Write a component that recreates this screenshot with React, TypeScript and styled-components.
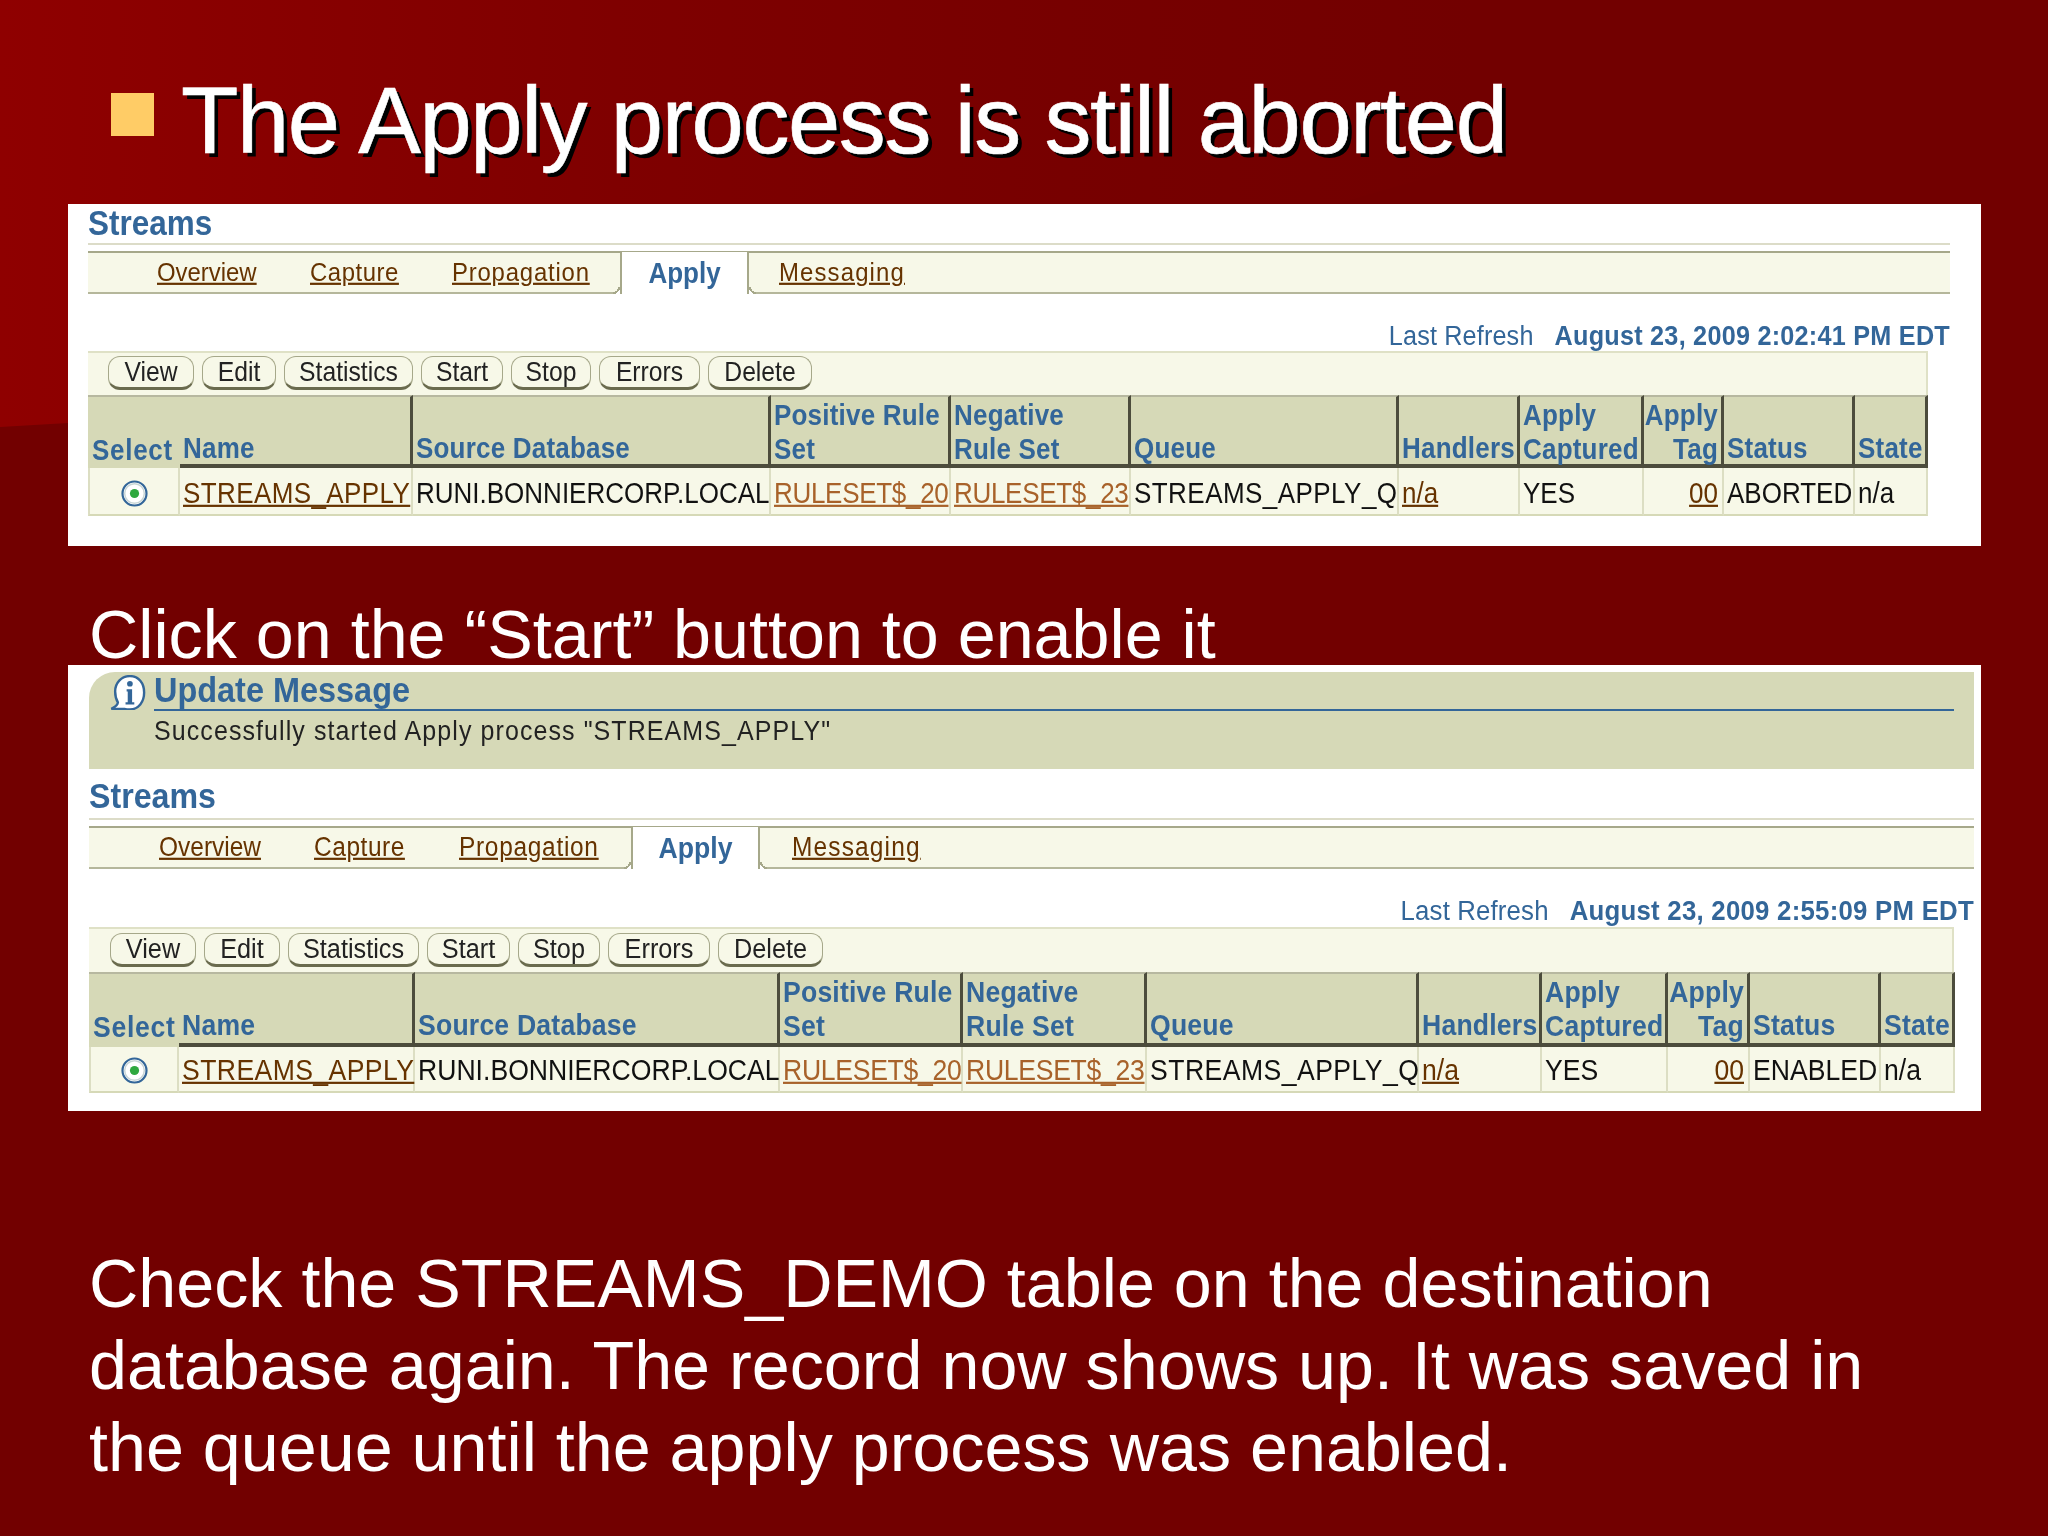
import React from "react";
import styled, { createGlobalStyle, css } from "styled-components";

const Global = createGlobalStyle`
  html, body { margin: 0; padding: 0; background: #720000; }
  * { box-sizing: border-box; }
`;

const stretched = css`
  display: inline-block;
  transform: scaleY(1.1);
  transform-origin: 50% 60%;
`;

const Slide = styled.main`
  position: relative;
  width: 2048px;
  height: 1536px;
  overflow: hidden;
  background: #720000;
  font-family: "Liberation Sans", Arial, sans-serif;
  isolation: isolate;
  &::before {
    content: "";
    position: absolute;
    inset: 0;
    z-index: -1;
    background: linear-gradient(to right, #8f0000 0, #7f0000 30%, #770000 52%, #720000 72%);
    clip-path: polygon(0 0, 100% 0, 100% 0, 1000px 300px, 68px 423px, 0 427px);
  }
`;

const TitleRow = styled.header`
  display: flex;
  align-items: flex-start;
  gap: 27px;
  height: 204px;
  padding: 71px 0 0 111px;
`;

const Bullet = styled.span`
  width: 43px;
  height: 43px;
  margin-top: 22px;
  background: #ffcc66;
`;

const Title = styled.h1`
  margin: 0;
  font-size: 94px;
  line-height: 100px;
  font-weight: 400;
  letter-spacing: -1.43px;
  color: #fff;
  -webkit-text-stroke: 0.6px #fff;
  text-shadow: 4px 4px 0 #000;
  white-space: nowrap;
`;

const Caption = styled.p`
  margin: 0;
  height: 119px;
  padding: 57px 0 0 89px;
  font-size: 68.25px;
  line-height: 62px;
  color: #fff;
  white-space: nowrap;
`;

const Closing = styled.p`
  margin: 131px 0 0 89px;
  width: 1800px;
  font-size: 68.25px;
  line-height: 82px;
  color: #fff;
`;

const Panel = styled.section<{ $size: number; $height: number; $inset: number; $top: number }>`
  position: relative;
  width: 1913px;
  height: ${(p) => p.$height}px;
  margin-left: 68px;
  padding: ${(p) => p.$top}px 0 0 ${(p) => p.$inset}px;
  background: #fff;
  font-size: ${(p) => p.$size}px;
  filter: blur(0.55px);
`;

const Content = styled.div<{ $width: number }>`
  width: ${(p) => p.$width}px;
`;

const MessageBox = styled.div`
  display: flex;
  height: 97px;
  padding: 3px 20px 0 22px;
  background: #d6d9b7;
  border-top-left-radius: 26px;
`;

const MessageIcon = styled.svg`
  flex: none;
  width: 38px;
  height: 35px;
  margin: 0 7px 0 -2px;
`;

const MessageBody = styled.div`
  flex: 1;
`;

const MessageTitle = styled.div`
  height: 36px;
  border-bottom: 2px solid #336699;
  font-size: 1.22em;
  font-weight: 700;
  line-height: 30px;
  color: #336699;
  span { ${stretched} }
`;

const MessageText = styled.div`
  margin-top: 6px;
  font-size: 0.94em;
  line-height: 26px;
  color: #222;
  letter-spacing: 1.08px;
  span { ${stretched} }
`;

const SectionTitle = styled.h2<{ $height: number }>`
  display: flex;
  align-items: flex-end;
  height: ${(p) => p.$height}px;
  margin: 0;
  padding-bottom: ${(p) => (p.$height < 45 ? 3.5 : 6)}px;
  border-bottom: 2px solid #dcdcc8;
  font-size: 1.21em;
  font-weight: 700;
  color: #336699;
  line-height: 32px;
  span { ${stretched} }
`;

const TabBar = styled.nav<{ $offset: number }>`
  display: flex;
  align-items: stretch;
  height: 43px;
  margin-top: 6px;
  padding-left: ${(p) => p.$offset}px;
  background: #f7f8e8;
  border-top: 2px solid #a6a88a;
  border-bottom: 2px solid #b5b79b;
`;

const TabLink = styled.a<{ $width: number; $spacing: number }>`
  flex: none;
  width: ${(p) => p.$width}px;
  align-self: center;
  margin-top: -1px;
  font-size: 0.92em;
  letter-spacing: ${(p) => p.$spacing}px;
  color: #663300;
  text-decoration: none;
  span {
    ${stretched}
    text-decoration: underline;
    text-underline-offset: 2px;
  }
`;

const ActiveTab = styled.a<{ $width: number; $gap: number }>`
  position: relative;
  flex: none;
  display: flex;
  justify-content: center;
  align-items: center;
  width: ${(p) => p.$width}px;
  margin: -1px ${(p) => p.$gap}px -2px 0;
  padding-top: 1px;
  background: #fff;
  border-left: 2px solid #a6a88a;
  border-right: 2px solid #a6a88a;
  font-size: 1em;
  font-weight: 700;
  color: #336699;
  text-decoration: none;
  span { ${stretched} }
  &::before, &::after {
    content: "";
    position: absolute;
    bottom: 0;
    width: 7px;
    height: 7px;
  }
  &::before {
    left: -9px;
    background: radial-gradient(circle at 0 0, #f7f8e8 5px, #a6a88a 5px 7px, #fff 7px);
  }
  &::after {
    right: -9px;
    background: radial-gradient(circle at 100% 0, #f7f8e8 5px, #a6a88a 5px 7px, #fff 7px);
  }
`;

const Refresh = styled.div<{ $height: number; $lift: number }>`
  display: flex;
  justify-content: flex-end;
  align-items: flex-end;
  gap: 21px;
  height: ${(p) => p.$height}px;
  font-size: 0.97em;
  line-height: 28px;
  letter-spacing: 0.15px;
  color: #336699;
  padding-bottom: ${(p) => p.$lift}px;
  span { ${stretched} }
`;

const RefreshDate = styled.span`
  font-weight: 700;
  letter-spacing: 0.24px;
`;

const Toolbar = styled.div<{ $width: number; $height: number; $pad: number }>`
  display: flex;
  align-items: center;
  gap: 8px;
  width: ${(p) => p.$width}px;
  height: ${(p) => p.$height}px;
  padding: 0 0 2px ${(p) => p.$pad}px;
  background: #f7f8e8;
  border-top: 2px solid #dfe1c6;
  border-right: 2px solid #dfe1c6;
`;

const ActionButton = styled.button<{ $width: number }>`
  flex: none;
  width: ${(p) => p.$width}px;
  height: 34px;
  padding: 0;
  font: inherit;
  font-size: 0.95em;
  color: #222;
  background: #f7f8e8;
  border: 1.5px solid #a6a88a;
  border-bottom: 3px solid #6a6b4e;
  border-radius: 12px;
  span { ${stretched} }
`;

const Table = styled.div<{ $columns: string; $headHeight: number; $rowHeight: number; $headPad: number; $bodyPad: number }>`
  --head-pad: ${(p) => p.$headPad}px;
  --body-pad: ${(p) => p.$bodyPad}px;
  display: grid;
  grid-template-columns: ${(p) => p.$columns};
  grid-template-rows: ${(p) => p.$headHeight}px ${(p) => p.$rowHeight}px;
  width: max-content;
`;

const HeadCell = styled.div<{ $right?: boolean; $plain?: boolean }>`
  display: flex;
  align-items: flex-end;
  justify-content: ${(p) => (p.$right ? "flex-end" : "flex-start")};
  padding: 0 3px var(--head-pad) 3px;
  background: #d6d9b7;
  font-size: 1em;
  font-weight: 700;
  line-height: 31px;
  color: #336699;
  text-align: ${(p) => (p.$right ? "right" : "left")};
  white-space: nowrap;
  letter-spacing: 0.2px;
  border-top: 2px solid #b7b8a0;
  ${(p) =>
    !p.$plain &&
    css`
      border-right: 3px solid #4c4c3c;
      border-bottom: 4px solid #4c4c3c;
    `}
  ${(p) =>
    p.$plain &&
    css`
      padding-left: 4px;
      padding-bottom: calc(var(--head-pad) + 2px);
      letter-spacing: 0.7px;
    `}
  span { ${stretched} }
`;

const BodyCell = styled.div<{ $right?: boolean; $center?: boolean }>`
  display: flex;
  align-items: center;
  justify-content: ${(p) => (p.$center ? "center" : p.$right ? "flex-end" : "flex-start")};
  padding: var(--body-pad) 4px 0 3px;
  background: #f7f8e8;
  border-right: 2px solid #dcdec3;
  border-bottom: 2px solid #d6d9b7;
  color: #111;
  white-space: nowrap;
  &:nth-child(12) { border-left: 2px solid #dcdec3; padding-left: 5px; }
  span { ${stretched} }
`;

const CellLink = styled.a<{ $light?: boolean; $spacing?: number }>`
  color: ${(p) => (p.$light ? "#a8622a" : "#663300")};
  letter-spacing: ${(p) => p.$spacing ?? 0}px;
  text-decoration: underline;
  text-underline-offset: 2px;
`;

const WideText = styled.span`
  letter-spacing: 0.45px;
`;

const RadioIcon = styled.svg`
  width: 27px;
  height: 27px;
`;

type Tab = { label: string; width: number; spacing: number };
type SnapshotData = {
  size: number;
  height: number;
  top: number;
  inset: number;
  contentWidth: number;
  titleHeight: number;
  tabOffset: number;
  tabs: Tab[];
  activeWidth: number;
  activeGap: number;
  messaging: number;
  refreshHeight: number;
  refreshLift: number;
  date: string;
  toolbarWidth: number;
  toolbarHeight: number;
  toolbarPad: number;
  buttonWidths: number[];
  columns: string;
  headHeight: number;
  rowHeight: number;
  headPad: number;
  bodyPad: number;
  status: string;
  message?: boolean;
};

const buttonLabels = ["View", "Edit", "Statistics", "Start", "Stop", "Errors", "Delete"];

const Radio = () => (
  <RadioIcon viewBox="0 0 27 27">
    <circle cx="13.5" cy="13.5" r="12" fill="#fff" stroke="#336699" strokeWidth="2.2" />
    <circle cx="13.5" cy="13.5" r="9.8" fill="none" stroke="#c9d6d6" strokeWidth="1.5" />
    <circle cx="13.5" cy="13.5" r="4.6" fill="#2fa83f" />
  </RadioIcon>
);

const Info = () => (
  <MessageIcon viewBox="2.500 1 31.500 32">
    <path
      d="M20 2C12 2 6.500 8.500 6.500 16c0 4.500 1 7.500 2.500 10 0 2-3 4.500-6 6h12c2 .5 3.500 .5 5 .5 8 0 13-7 13-15.500C33 8.500 28 2 20 2Z"
      fill="#fff"
      stroke="#336699"
      strokeWidth="2.2"
    />
    <circle cx="20" cy="9" r="2.600" fill="#336699" />
    <path d="M17 14h5v12h2v2h-8v-2h2v-10h-1Z" fill="#336699" />
  </MessageIcon>
);

const Snapshot = ({ d }: { d: SnapshotData }) => (
  <Panel $size={d.size} $height={d.height} $inset={d.inset} $top={d.top}>
    <Content $width={d.contentWidth}>
      {d.message && (
        <MessageBox>
          <Info />
          <MessageBody>
            <MessageTitle>
              <span>Update Message</span>
            </MessageTitle>
            <MessageText>
              <span>Successfully started Apply process "STREAMS_APPLY"</span>
            </MessageText>
          </MessageBody>
        </MessageBox>
      )}
      <SectionTitle $height={d.titleHeight}>
        <span>Streams</span>
      </SectionTitle>
      <TabBar $offset={d.tabOffset}>
        {d.tabs.map((t) => (
          <TabLink key={t.label} href="#" $width={t.width} $spacing={t.spacing}>
            <span>{t.label}</span>
          </TabLink>
        ))}
        <ActiveTab href="#" $width={d.activeWidth} $gap={d.activeGap}>
          <span>Apply</span>
        </ActiveTab>
        <TabLink href="#" $width={d.messaging} $spacing={1.15}>
          <span>Messaging</span>
        </TabLink>
      </TabBar>
      <Refresh $height={d.refreshHeight} $lift={d.refreshLift}>
        <span>Last Refresh</span>
        <RefreshDate>{d.date}</RefreshDate>
      </Refresh>
    </Content>
    <Toolbar $width={d.toolbarWidth} $height={d.toolbarHeight} $pad={d.toolbarPad}>
      {buttonLabels.map((b, i) => (
        <ActionButton key={b} $width={d.buttonWidths[i]}>
          <span>{b}</span>
        </ActionButton>
      ))}
    </Toolbar>
    <Table
      $columns={d.columns}
      $headHeight={d.headHeight}
      $rowHeight={d.rowHeight}
      $headPad={d.headPad}
      $bodyPad={d.bodyPad}
    >
      <HeadCell $plain><span>Select</span></HeadCell>
      <HeadCell><span>Name</span></HeadCell>
      <HeadCell><span>Source Database</span></HeadCell>
      <HeadCell><span>Positive Rule<br />Set</span></HeadCell>
      <HeadCell><span>Negative<br />Rule Set</span></HeadCell>
      <HeadCell><span>Queue</span></HeadCell>
      <HeadCell><span>Handlers</span></HeadCell>
      <HeadCell><span>Apply<br />Captured</span></HeadCell>
      <HeadCell $right><span>Apply<br />Tag</span></HeadCell>
      <HeadCell><span>Status</span></HeadCell>
      <HeadCell><span>State</span></HeadCell>

      <BodyCell $center><Radio /></BodyCell>
      <BodyCell><span><CellLink href="#" $spacing={0.4}>STREAMS_APPLY</CellLink></span></BodyCell>
      <BodyCell><span>RUNI.BONNIERCORP.LOCAL</span></BodyCell>
      <BodyCell><span><CellLink $light href="#" $spacing={-0.3}>RULESET$_20</CellLink></span></BodyCell>
      <BodyCell><span><CellLink $light href="#" $spacing={-0.3}>RULESET$_23</CellLink></span></BodyCell>
      <BodyCell><WideText>STREAMS_APPLY_Q</WideText></BodyCell>
      <BodyCell><span><CellLink href="#">n/a</CellLink></span></BodyCell>
      <BodyCell><span>YES</span></BodyCell>
      <BodyCell $right><span><CellLink href="#">00</CellLink></span></BodyCell>
      <BodyCell><span>{d.status}</span></BodyCell>
      <BodyCell><span>n/a</span></BodyCell>
    </Table>
  </Panel>
);

const first: SnapshotData = {
  size: 26,
  height: 342,
  top: 0,
  inset: 20,
  contentWidth: 1862,
  titleHeight: 41,
  tabOffset: 69,
  tabs: [
    { label: "Overview", width: 153, spacing: 0 },
    { label: "Capture", width: 142, spacing: 0.55 },
    { label: "Propagation", width: 168, spacing: 0.8 },
  ],
  activeWidth: 129,
  activeGap: 30,
  messaging: 130,
  refreshHeight: 57,
  refreshLift: 2,
  date: "August 23, 2009 2:02:41 PM EDT",
  toolbarWidth: 1840,
  toolbarHeight: 44,
  toolbarPad: 20,
  buttonWidths: [86, 74, 129, 82, 80, 101, 104],
  columns: "92px 233px 358px 180px 180px 268px 121px 124px 80px 131px 73px",
  headHeight: 73,
  rowHeight: 48,
  headPad: 0,
  bodyPad: 4,
  status: "ABORTED",
};

const second: SnapshotData = {
  size: 26.6,
  height: 446,
  top: 7,
  inset: 21,
  contentWidth: 1885,
  titleHeight: 51,
  tabOffset: 70,
  tabs: [
    { label: "Overview", width: 155, spacing: 0 },
    { label: "Capture", width: 145, spacing: 0.55 },
    { label: "Propagation", width: 172, spacing: 0.7 },
  ],
  activeWidth: 129,
  activeGap: 32,
  messaging: 135,
  refreshHeight: 58,
  refreshLift: 3,
  date: "August 23, 2009 2:55:09 PM EDT",
  toolbarWidth: 1865,
  toolbarHeight: 45,
  toolbarPad: 21,
  buttonWidths: [86, 76, 131, 83, 82, 102, 105],
  columns: "90px 236px 365px 183px 184px 272px 123px 126px 82px 131px 74px",
  headHeight: 75,
  rowHeight: 46,
  headPad: 2,
  bodyPad: 3,
  status: "ENABLED",
  message: true,
};

export default function App() {
  return (
    <Slide>
      <Global />
      <TitleRow>
        <Bullet />
        <Title>The Apply process is still aborted</Title>
      </TitleRow>
      <Snapshot d={first} />
      <Caption>Click on the “Start” button to enable it</Caption>
      <Snapshot d={second} />
      <Closing>
        Check the STREAMS_DEMO table on the destination database again. The record now shows up. It was saved in the
        queue until the apply process was enabled.
      </Closing>
    </Slide>
  );
}
